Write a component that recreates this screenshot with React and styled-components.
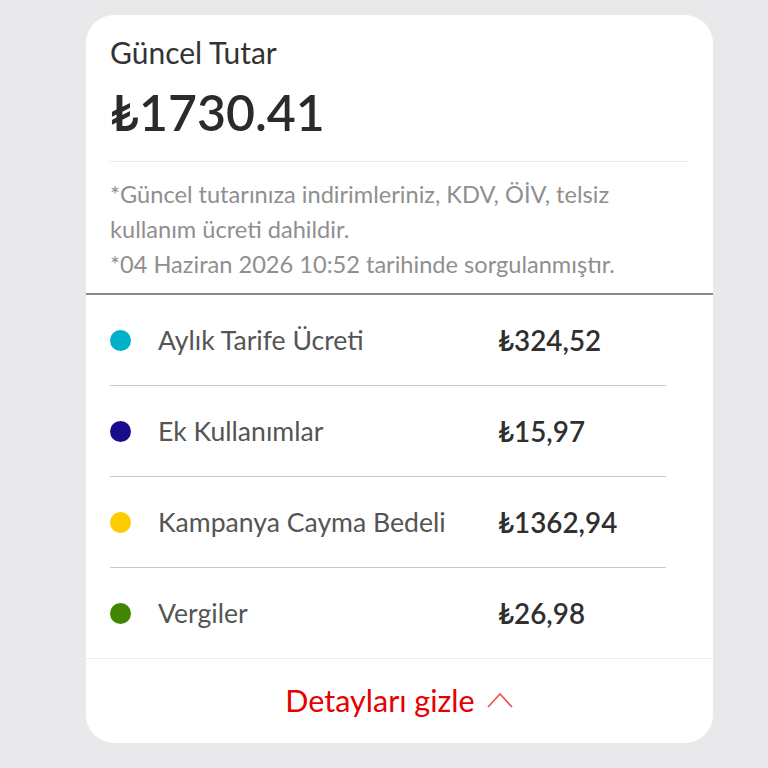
import React from 'react'
import styled, { createGlobalStyle } from 'styled-components'

const GlobalStyle = createGlobalStyle`
    html, body {
        margin: 0;
        padding: 0;
        background: #e9e9eb;
        font-family: Lato, "Noto Sans", "DejaVu Sans", sans-serif;
    }
`

const Page = styled.div`
    padding: 15px 55px 26px 86px;
    width: 768px;
    box-sizing: border-box;
`

const Card = styled.div`
    background: #fff;
    border-radius: 28px;
    overflow: hidden;
`

const Header = styled.div`
    padding: 19px 24px 11px 24px;
`

const Title = styled.div`
    font-size: 30px;
    line-height: 36px;
    color: #333;
`

const Amount = styled.div`
    margin-top: 15px;
    font-size: 50px;
    line-height: 54px;
    font-weight: 600;
    color: #2b2b2b;
`

const ThinLine = styled.div`
    margin-top: 22px;
    height: 1px;
    background: #ececec;
`

const Note = styled.p`
    margin: 15px 0 0;
    font-size: 23.6px;
    line-height: 35px;
    color: #8f8f8f;
`

const ThickLine = styled.div`
    height: 2px;
    background: #8c8c8c;
`

const List = styled.div`
    padding: 0 47px 0 24px;
`

const Row = styled.div`
    display: grid;
    grid-template-columns: 48px 340px auto;
    align-items: center;
    height: 90px;
    border-bottom: ${p => (p.$last ? 'none' : '1px solid #c8c8c8')};
`

const Dot = styled.span`
    width: 21px;
    height: 21px;
    border-radius: 50%;
    background: ${p => p.$color};
`

const Label = styled.span`
    font-size: 26.6px;
    color: #555;
`

const Value = styled.span`
    font-size: 27.8px;
    font-weight: 600;
    color: #2f2f2f;
`

const Footer = styled.button`
    display: flex;
    width: 100%;
    height: 85px;
    align-items: center;
    justify-content: center;
    gap: 11px;
    border: none;
    border-top: 1px solid #ededed;
    background: none;
    font-family: inherit;
    font-size: 30.5px;
    color: #e60000;
    padding: 0 0 3px;
`

const items = [
    { color: '#00b0ca', label: 'Aylık Tarife Ücreti', value: '₺324,52' },
    { color: '#180c8a', label: 'Ek Kullanımlar', value: '₺15,97' },
    { color: '#fecb00', label: 'Kampanya Cayma Bedeli', value: '₺1362,94' },
    { color: '#428500', label: 'Vergiler', value: '₺26,98' },
]

export default function App() {
    return (
        <>
            <GlobalStyle />
            <Page>
                <Card>
                    <Header>
                        <Title>Güncel Tutar</Title>
                        <Amount>₺1730.41</Amount>
                        <ThinLine />
                        <Note>
                            *Güncel tutarınıza indirimleriniz, KDV, ÖİV, telsiz kullanım ücreti dahildir.
                            <br />
                            *04 Haziran 2026 10:52 tarihinde sorgulanmıştır.
                        </Note>
                    </Header>
                    <ThickLine />
                    <List>
                        {items.map((it, i) => (
                            <Row key={it.label} $last={i === items.length - 1}>
                                <Dot $color={it.color} />
                                <Label>{it.label}</Label>
                                <Value>{it.value}</Value>
                            </Row>
                        ))}
                    </List>
                    <Footer>
                        Detayları gizle
                        <svg width="28" height="18" viewBox="0 0 28 18">
                            <polyline points="2,16 14,3 26,16" fill="none" stroke="#ea5a5c" strokeWidth="1.8" />
                        </svg>
                    </Footer>
                </Card>
            </Page>
        </>
    )
}
